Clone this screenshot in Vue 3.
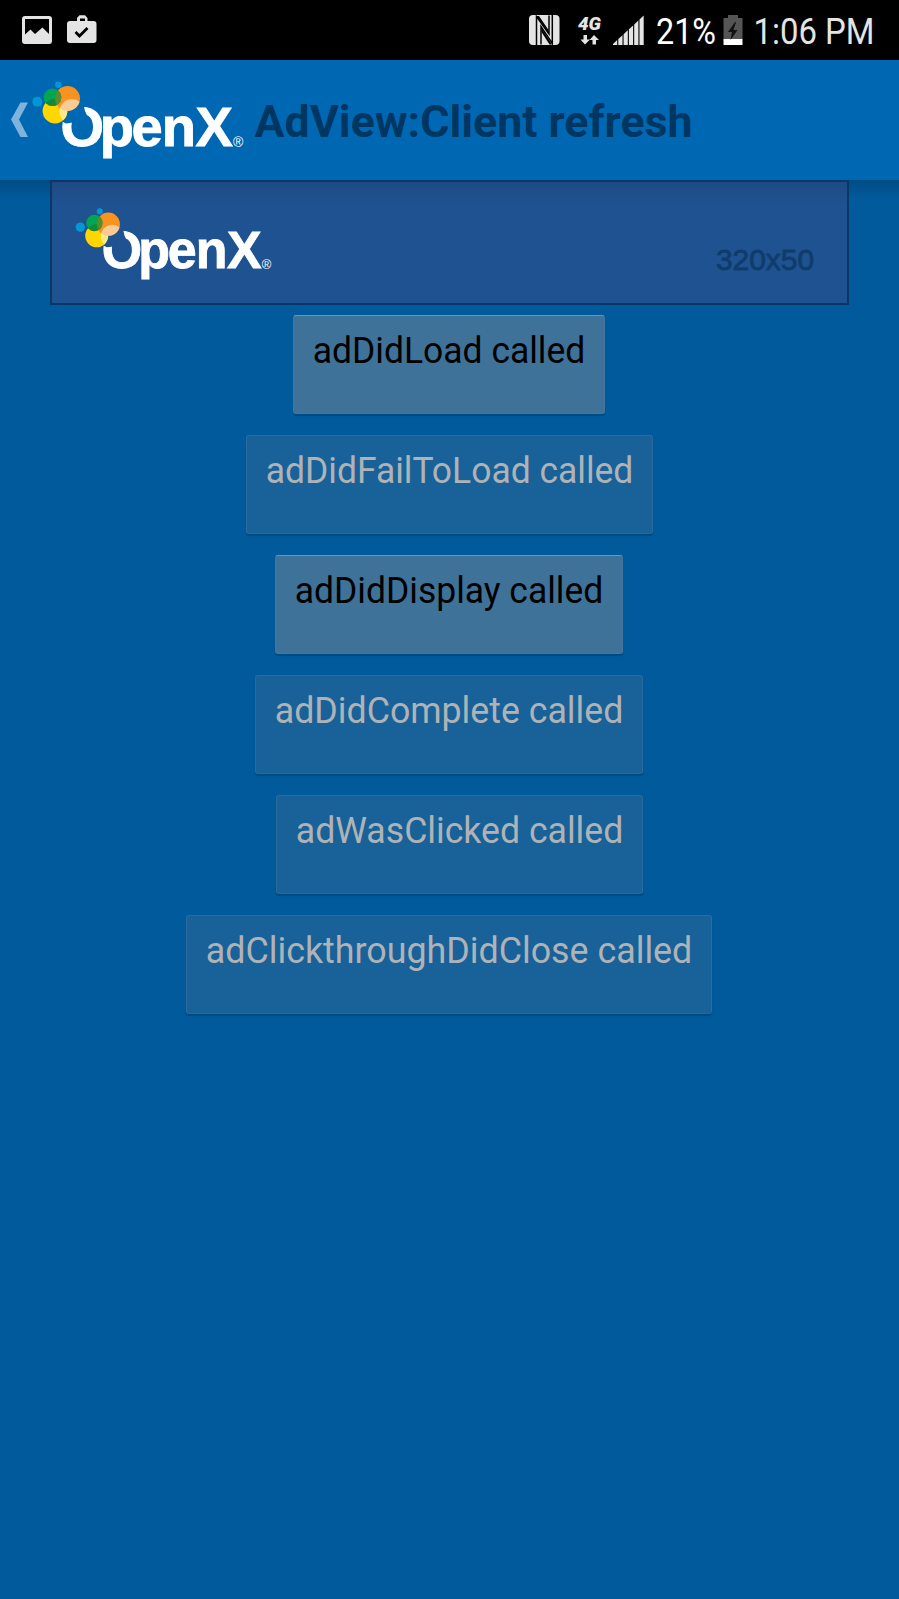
<script setup>
const callbacks = [
  { name: 'adDidLoad called', active: true, width: 312 },
  { name: 'adDidFailToLoad called', active: false, width: 407 },
  { name: 'adDidDisplay called', active: true, width: 348 },
  { name: 'adDidComplete called', active: false, width: 388 },
  { name: 'adWasClicked called', active: false, width: 367, shifted: true },
  { name: 'adClickthroughDidClose called', active: false, width: 526 },
]
const bars = [0, 1, 2, 3, 4, 5]
</script>

<template>
  <div class="screen">
    <div class="status">
      <svg width="899" height="60" viewBox="0 0 899 60">
        <g fill="#e4e4e4">
          <path fill-rule="evenodd" d="M25 16h24a3 3 0 0 1 3 3v22a3 3 0 0 1-3 3H25a3 3 0 0 1-3-3V19a3 3 0 0 1 3-3zM25 19v15.500l5.500-5 4.500 4.500 7.500-6.500 6.500 6.500V19z" />
          <path fill-rule="evenodd" d="M70 21h7v-3l2.500-2.800h5.500l2.500 2.800v3h6a3 3 0 0 1 3 3v16a3 3 0 0 1-3 3H70a3 3 0 0 1-3-3V24a3 3 0 0 1 3-3zM80 21h5v-2.500h-5z" />
        </g>
        <path d="M75.500 32l4 4 8-8" fill="none" stroke="#000" stroke-width="2.800" />
        <rect x="529" y="15" width="30.500" height="30" rx="4" fill="#e4e4e4" />
        <path d="M536.500 45V16.500L549 34V15.500M541 44.500V26.500L552.300 43.500V15" fill="none" stroke="#000" stroke-width="1.500" />
        <path d="M536.500 16h2.500l9.500 14v4zM552 44.500h-2.500l-8-12.500v-4z" fill="#000" />
        <text x="578" y="29.500" class="network" textLength="23" lengthAdjust="spacingAndGlyphs">4G</text>
        <path d="M583.500 35h3.500v4.500h3l-5 5-4.500-5h3zM592.500 44.500h3.500v-4.500h3l-5-5-4.500 5h3z" fill="#e4e4e4" />
        <path v-for="i in bars" :key="i" :d="`M${613 + i * 5.300} 45v${-1 - i * 4.900}l4.200-3.900v${4.900 + i * 4.900}z`" fill="#e4e4e4" />
        <text x="656" y="44" class="clock light" textLength="60" lengthAdjust="spacingAndGlyphs">21%</text>
        <path d="M728 15h10v3h4.500v21h-19V18h4.500z" fill="#555" />
        <path d="M723.500 39h19v6h-19z" fill="#fff" />
        <path d="M735 22l-7 10h4l-1.500 8 7-10h-4l2.500-8z" fill="#111" />
        <text x="753.500" y="44" class="clock" textLength="121" lengthAdjust="spacingAndGlyphs">1:06 PM</text>
      </svg>
    </div>
    <header class="bar">
      <svg width="899" height="120" viewBox="0 60 899 120">
        <defs>
          <mask id="o-cut" maskUnits="userSpaceOnUse" x="20" y="70" width="240" height="100">
            <rect x="20" y="70" width="240" height="100" fill="#fff" />
            <path d="M50 100H82.300L85 111 87 115.500 80 119 73 122.500 66 123.500 62 121.500 50 121z" fill="#000" />
          </mask>
          <clipPath id="petals">
            <circle cx="67.500" cy="98.500" r="12.500" />
            <circle cx="55" cy="111" r="12.400" />
          </clipPath>
          <clipPath id="green"><circle cx="52.500" cy="97.200" r="8.800" /></clipPath>
          <symbol id="openx" viewBox="28 76 222 90">
            <circle cx="58.300" cy="84.700" r="3.300" fill="#0098d4" />
            <circle cx="37.300" cy="101.700" r="5" fill="#0098d4" />
            <circle cx="55" cy="111" r="12.400" fill="#ffd600" />
            <circle cx="67.500" cy="98.500" r="12.500" fill="#f7931e" />
            <circle cx="52.500" cy="97.200" r="8.800" fill="#00a651" />
            <circle cx="55" cy="111" r="12.400" fill="#128a3c" clip-path="url(#green)" />
            <circle cx="67.500" cy="98.500" r="12.500" fill="#5d8a2c" clip-path="url(#green)" />
            <circle cx="72" cy="111.500" r="12.500" fill="#fff" fill-opacity=".52" clip-path="url(#petals)" />
            <text class="word" x="60.500 99.800 131.500 161.700 195.400" y="146" mask="url(#o-cut)">OpenX</text>
            <text class="reg" x="233" y="146.500">®</text>
          </symbol>
        </defs>
        <path d="M20.500 102.500h7.500L19 119.500l9 17.500h-7.500L11 119.500z" fill="#7fb3dc" />
        <use href="#openx" x="28" y="76" width="222" height="90" />
        <text class="title" x="254.500" y="137" textLength="438" lengthAdjust="spacingAndGlyphs">AdView:Client refresh</text>
      </svg>
    </header>
    <main class="content">
      <div class="ad">
        <svg width="795" height="121" viewBox="52 182 795 121">
          <use href="#openx" x="71.700" y="203.300" width="205.900" height="83.500" />
          <text class="size" x="716" y="269.800" textLength="98" lengthAdjust="spacingAndGlyphs">320x50</text>
        </svg>
      </div>
      <div class="list">
        <button v-for="c in callbacks" :key="c.name" class="event" :class="{ active: c.active, shifted: c.shifted }" :style="{ width: c.width + 'px' }">
          <svg :width="c.width - 2" height="60" :viewBox="`0 0 ${c.width - 2} 60`">
            <text x="18.800" y="47.400" :textLength="c.width - 39.500" lengthAdjust="spacingAndGlyphs">{{ c.name }}</text>
          </svg>
        </button>
      </div>
    </main>
  </div>
</template>

<style>
body { margin: 0; background: #005a9b; }
</style>

<style scoped>
.screen { width: 899px; height: 1599px; background: #005a9b; font-family: Roboto, sans-serif; overflow: hidden; display: flex; flex-direction: column; }
svg { display: block; }
.status { height: 60px; background: #000; }
.clock { font-size: 36px; fill: #e4e4e4; }
.light { fill: #fff; }
.network { font: italic 900 18px Roboto, sans-serif; fill: #e4e4e4; }
.bar { height: 120px; background: #0068b3; }
.title { font-size: 44.500px; font-weight: 700; fill: #003662; }
.word { font: 700 56px "Liberation Sans", sans-serif; fill: #fff; stroke: #fff; stroke-width: .9px; }
.reg { font: 14px "Liberation Sans", sans-serif; fill: #fff; }
.content { display: flex; flex-direction: column; align-items: center; flex: 1; background: linear-gradient(#004c83, #005a9b 18px); }
.ad { box-sizing: border-box; width: 799px; height: 125px; border: 2px solid #0a3767; background: linear-gradient(#1e4a84, #1f5291 22px); }
.size { font: 30px "Liberation Sans", sans-serif; fill: #103c6c; stroke: #103c6c; stroke-width: .8px; }
.list { display: flex; flex-direction: column; align-items: center; gap: 21px; padding: 10px 1px 0 0; }
.event { box-sizing: border-box; height: 99px; padding: 0; border: 1px solid #2b6b9d; border-bottom-color: #286695; border-radius: 3px; background: #186299; box-shadow: 0 1.500px 1px #004b80; color: #b0b3b6; font: 36px Roboto, sans-serif; display: flex; align-items: flex-start; justify-content: center; }
.event text { fill: currentColor; }
.event.active { background: #3f7298; border-color: #42779e; border-top-color: #6397c3; color: #000; }
.event.shifted { margin-left: 21px; }
</style>
